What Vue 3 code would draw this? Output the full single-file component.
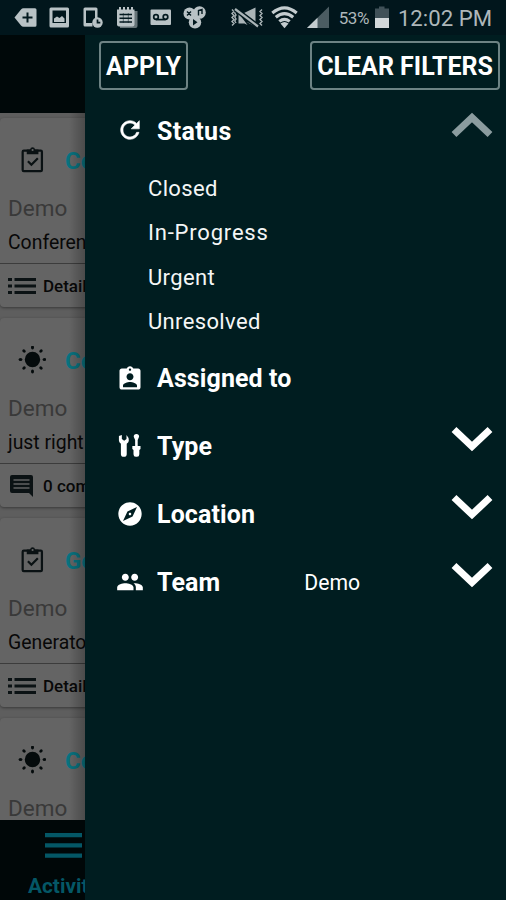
<script setup>
const cards = [
  { kind: 'task', title: 'Conference', team: 'Demo', body: 'Conference', foot: 'list', footText: 'Details' },
  { kind: 'sun', title: 'Comfort', team: 'Demo', body: 'just right', foot: 'chat', footText: '0 comments' },
  { kind: 'task', title: 'Generator', team: 'Demo', body: 'Generator', foot: 'list', footText: 'Details' },
  { kind: 'sun', title: 'Comfort', team: 'Demo', body: '', foot: 'chat', footText: '' },
]
const statuses = ['Closed', 'In-Progress', 'Urgent', 'Unresolved']
const rays = [0, 45, 90, 135, 180, 225, 270, 315]
const groups = [
  { name: 'Assigned to', icon: 'M19 3h-4.18C14.4 1.84 13.3 1 12 1c-1.3 0-2.4.84-2.82 2H5c-1.1 0-2 .9-2 2v14c0 1.1.9 2 2 2h14c1.1 0 2-.9 2-2V5c0-1.1-.9-2-2-2zm-7 0c.55 0 1 .45 1 1s-.45 1-1 1-1-.45-1-1 .45-1 1-1zm0 4c1.66 0 3 1.34 3 3s-1.34 3-3 3-3-1.34-3-3 1.34-3 3-3zm6 12H6v-1.4c0-2 4-3.1 6-3.1s6 1.100 6 3.100V19z', value: '', open: false },
  { name: 'Type', icon: 'M2.500 3.500v3.700q0 1.600 1.700 2.800V19q0 2.200 2.500 2.200T9.200 19V10q1.800-1.200 1.800-2.800Q11 4.500 9 2.500V6L7 7.500 5 6V2.500zM17.500 1.800a2.300 2.300 0 0 0-2.300 2.300l1.200 2.700V12H14v2.500l1 1V19q0 2.200 2 2.200h1q2 0 2-2.200v-3.500l1-1V12h-2.400V6.800l1.200-2.700a2.300 2.300 0 0 0-2.300-2.300z', value: '', open: true },
  { name: 'Location', icon: 'M12 10.900c-.61 0-1.100.49-1.100 1.100s.49 1.100 1.100 1.100c.61 0 1.100-.49 1.100-1.100s-.49-1.100-1.100-1.100zM12 2C6.480 2 2 6.480 2 12s4.480 10 10 10 10-4.480 10-10S17.520 2 12 2zm2.190 12.190L6 18l3.810-8.190L18 6l-3.810 8.190z', value: '', open: true },
  { name: 'Team', icon: 'M16 11c1.660 0 2.990-1.340 2.990-3S17.660 5 16 5s-3 1.340-3 3 1.340 3 3 3zm-8 0c1.660 0 2.990-1.340 2.990-3S9.660 5 8 5 5 6.340 5 8s1.340 3 3 3zm0 2c-2.330 0-7 1.170-7 3.500V19h14v-2.500c0-2.330-4.670-3.500-7-3.500zm8 0c-.29 0-.62.02-.97.05 1.160.84 1.970 1.970 1.970 3.450V19h6v-2.500c0-2.330-4.670-3.500-7-3.500z', value: 'Demo', open: true },
]
</script>

<template>
  <div class="screen">
    <header class="statusbar">
      <svg class="tray" viewBox="0 0 506 35">
        <g fill="#b9c2c5">
          <path d="M14.500 17.500 21 9.500q1-1.300 2.500-1.300H35q1.500 0 1.500 1.500v15.600q0 1.500-1.500 1.500H23.500q-1.500 0-2.500-1.300z" />
          <path fill-rule="evenodd" d="M51 7.500h16.500q1.500 0 1.500 1.500v17q0 1.500-1.500 1.500H51q-1.500 0-1.500-1.500V9q0-1.500 1.500-1.500zM52.500 10.500v12.500h13.500V10.500z" />
          <path d="M54 22v-3.500l3-2 2.500 1.500 2.500-2 2.500 2.500V22z" />
          <path fill-rule="evenodd" d="M85 7.500h11q1.500 0 1.500 1.500v9h-2.500v-7.500h-9V23h6.500v3.500H85q-1.500 0-1.500-1.500V9q0-1.500 1.500-1.500z" />
          <circle cx="97.500" cy="22.500" r="5.200" />
          <path d="M120 11h17.500v15q0 2-2 2H120z" opacity=".55" />
          <path d="M117 9.500h17.500v15q0 2-2 2H119q-2 0-2-2z" />
          <path d="M119 7h2v4h-2zM123 7h2v4h-2zM127 7h2v4h-2zM131 7h2v4h-2z" />
          <rect x="150.500" y="9.500" width="20.500" height="15.500" rx="1" />
          <circle cx="189.500" cy="13.500" r="6" /><circle cx="199.500" cy="12.500" r="6.300" /><circle cx="195" cy="22.300" r="6.200" />
        </g>
        <g fill="none" stroke="#03191f" stroke-width="1.700">
          <path d="M22.500 17.500h10M27.500 12.500v10" stroke-width="2" />
          <path d="M97.500 19.500v3.200h2.800" />
          <path d="M119.500 14.500h12.500M119.500 18.200h12.500M119.500 22h12.500" stroke-width="1.400" />
          <path d="M123.300 13v10M128.300 13v10" stroke-width=".5" />
          <circle cx="156" cy="17" r="2.300" /><circle cx="165.500" cy="17" r="2.300" /><path d="M156 19.600h9.500" />
          <path d="m187 11.500 4 4M191 11.500l-4 4M198.500 15.500v-5l3.500-1v4.500" stroke-width="1.400" />
          <path d="m193 19 4.500 3.300-4.500 3.300z" fill="#03191f" stroke="none" />
        </g>
        <path d="M238.500 13v10.500h6l3 1.500zM255.500 7.500v14.500L244 13z M246.500 22l9 4.500v-2z" fill="#aab4b7" />
        <g fill="none" stroke="#aab4b7">
          <path d="m232 9.500 2 2-2 2 2 2-2 2 2 2-2 2 2 2-2 2M236 11l-1.200 2 1.200 2-1.200 2 1.200 2-1.200 2 1.200 2M262 9.500l-2 2 2 2-2 2 2 2-2 2 2 2-2 2 2 2" stroke-width="1.400" />
          <path d="m235 9 23 17.500" stroke="#03191f" stroke-width="5" />
          <path d="m235 9 23 17.500" stroke-width="2.200" />
        </g>
        <g fill="none" stroke="#c4cccf" stroke-width="3.100">
          <path d="M272.300 13q12.200-10.200 24.400 0M275.800 17.300q8.700-7.300 17.400 0M279.300 21.400q5.200-4.200 10.400 0" />
          <path d="m280.500 23.600 4 4.600 4-4.600q-4-3-8 0z" fill="#c4cccf" stroke="none" />
        </g>
        <path d="M329 6.500V28h-22z" fill="#4b5c62" /><path d="M317.500 17.700V28H307z" fill="#c4cccf" />
        <path d="M375 8.500h4V6.500h5.500v2h4.500V18h-14z" fill="#405158" /><path d="M375 18h14v10h-14z" fill="#d2d8da" />
      </svg>
      <span class="battery">53%</span>
      <span class="clock">12:02 PM</span>
    </header>
    <main class="body">
      <section class="feed">
        <div class="titlebar"></div>
        <div class="cards">
          <article v-for="(c, i) in cards" :key="i" class="card">
            <div class="head">
              <svg v-if="c.kind === 'task'" class="kind" viewBox="0 0 24 24" fill="none" stroke="#0a1113" stroke-width="1.900">
                <rect x="4" y="4" width="16.500" height="17.500" rx="1" />
                <path d="m8.500 13 3 3 5.500-5.500" />
                <path d="M7.500 3h2.800q.5-2 2.200-2t2.200 2h2.800v4h-10z" fill="#0a1113" stroke="none" />
                <circle cx="12.500" cy="3.400" r=".9" fill="#666" stroke="none" />
              </svg>
              <svg v-else class="kind" viewBox="0 0 28 28" fill="#050b0c">
                <circle cx="14.500" cy="13.500" r="7.700" />
                <ellipse v-for="r in rays" :key="r" cx="14.500" cy="1.500" rx="1.500" ry="1.900" :transform="`rotate(${r} 14.5 13.5)`" />
              </svg>
              <h2>{{ c.title }}</h2>
            </div>
            <p class="team">{{ c.team }}</p>
            <p class="text">{{ c.body }}</p>
            <div class="foot">
              <svg v-if="c.foot === 'list'" class="listicon" viewBox="0 0 28 16" fill="#0b1214">
                <path d="M0 0h4v3H0zM0 6.500h4v3H0zM0 13h4v3H0zM6.500 0H28v3H6.500zM6.500 6.500H28v3H6.500zM6.500 13H28v3H6.500z" />
              </svg>
              <svg v-else class="chaticon" viewBox="0 0 28 24">
                <path d="M4 1h19q2 0 2 2v20l-4-4H4q-2 0-2-2V3q0-2 2-2z" fill="#0b1214" />
                <path d="M5.500 6h16M5.500 10h16M5.500 14h16" stroke="#626262" stroke-width="1.600" />
              </svg>
              <span>{{ c.footText }}</span>
            </div>
          </article>
        </div>
        <nav class="tabs">
          <svg class="menu" viewBox="0 0 37 25" fill="#045766"><path d="M0 0h37v4.300H0zM0 10.200h37v4.300H0zM0 20.400h37v4.300H0z" /></svg>
          <span>Activity</span>
        </nav>
      </section>
      <aside class="drawer">
        <div class="actions">
          <button class="apply"><span>APPLY</span></button>
          <button class="clear"><span>CLEAR FILTERS</span></button>
        </div>
        <div class="group first">
          <svg class="gicon" viewBox="0 0 24 24" fill="#fff" stroke="#fff" stroke-width=".5"><path d="M17.650 6.350C16.200 4.900 14.210 4 12 4c-4.420 0-7.990 3.580-7.990 8s3.570 8 7.990 8c3.730 0 6.840-2.550 7.730-6h-2.080c-.82 2.330-3.040 4-5.650 4-3.310 0-6-2.690-6-6s2.690-6 6-6c1.660 0 3.140.69 4.220 1.780L13 11h7V4l-2.350 2.350z" /></svg>
          <h3>Status</h3>
          <svg class="chev" viewBox="0 0 42 26"><path d="M3 22.500 21 5.500l18 17" fill="none" stroke="#8b9c9f" stroke-width="7" /></svg>
        </div>
        <ul class="options">
          <li v-for="s in statuses" :key="s" :class="{ hyphenated: s.includes('-') }">{{ s }}</li>
        </ul>
        <div v-for="g in groups" :key="g.name" class="group">
          <svg class="gicon" viewBox="0 0 24 24" fill="#fff"><path :d="g.icon" /></svg>
          <h3>{{ g.name }}</h3>
          <span v-if="g.value" class="value">{{ g.value }}</span>
          <svg v-if="g.open" class="chev" viewBox="0 0 42 26"><path d="m3 3.500 18 17 18-17" fill="none" stroke="#fff" stroke-width="7" /></svg>
        </div>
      </aside>
    </main>
  </div>
</template>

<style>
body { margin: 0; background: #001d20; }
</style>
<style scoped>
* { box-sizing: border-box; }
h2, h3, p, ul { margin: 0; padding: 0; list-style: none; }
svg { display: block; flex: none; }
.screen { width: 506px; height: 900px; display: flex; flex-direction: column; overflow: hidden; background: #001d20; font-family: Roboto, sans-serif; white-space: nowrap; }
.statusbar { position: relative; height: 35px; flex: none; background: #01161c; display: flex; justify-content: flex-end; align-items: center; color: #aeb7ba; padding-right: 14px; }
.tray { position: absolute; inset: 0; width: 506px; height: 35px; }
.battery { font-size: 17px; letter-spacing: -.5px; margin-right: 29px; padding-top: 1px; }
.clock { font-size: 22.200px; padding-top: 1px; }
.body { flex: 1; min-height: 0; display: flex; }
.feed { width: 85px; flex: none; display: flex; flex-direction: column; overflow: hidden; position: relative; background: #606060; }
.feed::after { content: ''; position: absolute; top: 78px; right: 0; width: 16px; height: 707px; background: linear-gradient(90deg, transparent, rgba(0, 0, 0, .25)); }
.titlebar { height: 78px; flex: none; background: #000809; }
.cards { flex: 1; min-height: 0; overflow: hidden; display: flex; flex-direction: column; gap: 11px; padding-top: 5px; background: #5e5e5e; }
.card { height: 189px; flex: none; width: 400px; background: #646464; border-radius: 4px; box-shadow: 0 1px 3px rgba(0, 0, 0, .4); }
.head { height: 76.500px; padding: 7px 0 0 18px; display: flex; align-items: center; }
.kind { width: 28px; height: 28px; }
h2 { font-size: 24px; line-height: 30px; font-weight: 700; color: #08717e; margin-left: 19px; padding-top: 2px; }
.team { font-size: 22.500px; line-height: 28px; height: 28px; padding-left: 8px; color: #393939; margin-top: -1px; }
.text { font-size: 19.400px; line-height: 24px; height: 41.500px; padding: 9px 0 0 8px; color: #080808; }
.foot { height: 44px; border-top: 1.500px solid #3c3c3c; padding-left: 8px; display: flex; align-items: center; font-size: 17px; font-weight: 500; color: #080808; }
.listicon { width: 28px; height: 16px; margin-right: 7px; }
.chaticon { width: 28px; height: 24px; margin-right: 7px; }
.tabs { height: 80px; flex: none; width: 127px; background: #000708; display: flex; flex-direction: column; align-items: center; padding-top: 13px; color: #045766; font-size: 20.800px; font-weight: 700; }
.menu { width: 37px; height: 25px; margin-bottom: 16px; }
.drawer { flex: 1; min-width: 0; background: #001d20; color: #fff; }
.actions { display: flex; justify-content: space-between; padding: 6px 6px 0 14px; height: 63px; }
button { font-family: inherit; height: 49px; padding: 2px 0 0; background: transparent; border: 2px solid #6d8384; border-radius: 4px; color: #fff; font-size: 25px; font-weight: 700; }
.apply { width: 89px; }
.clear { width: 190px; }
button span { display: block; }
.group { position: relative; height: 67.800px; display: flex; align-items: center; padding-left: 31px; }
.gicon { width: 28px; height: 28px; margin-right: 13px; }
.first .gicon { margin-top: -3px; }
h3 { font-size: 25px; line-height: 30px; font-weight: 700; padding-top: 1px; letter-spacing: .1px; }
.first h3 { letter-spacing: .35px; }
.chev { width: 42px; height: 26px; margin: 0 13px 14px auto; }
.value { font-size: 21.200px; margin-left: 84px; }
.options { padding: 0 0 1px 63px; }
.options li { height: 44.500px; line-height: 45px; font-size: 22px; letter-spacing: .35px; color: #f4f6f6; }
.options .hyphenated { letter-spacing: .8px; }
</style>
